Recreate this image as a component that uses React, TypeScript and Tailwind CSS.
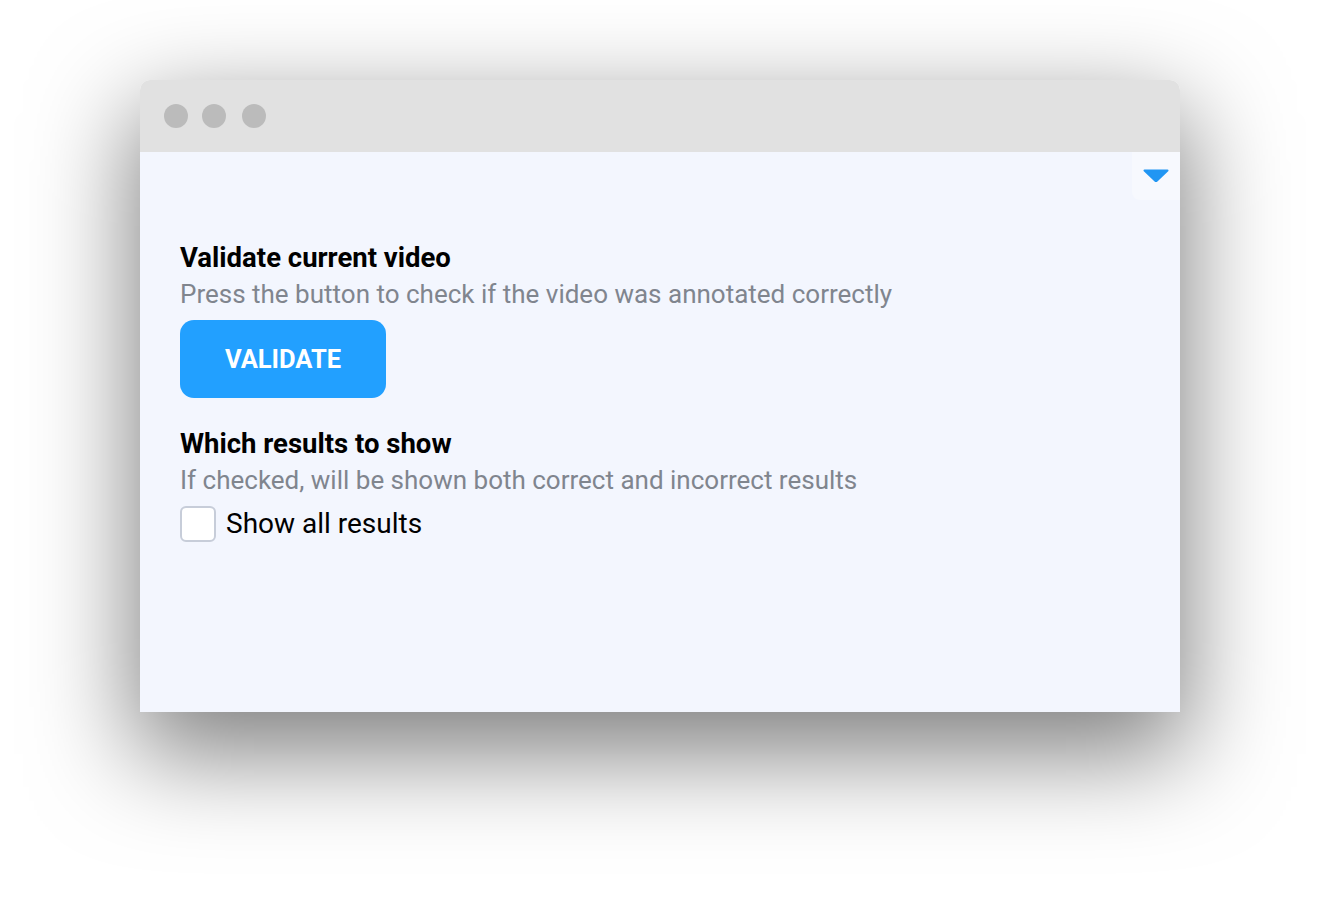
import React from "react";

export default function App() {
  return (
    <div className="w-[1320px] h-[912px] bg-white overflow-hidden" style={{ fontFamily: "Roboto, 'Liberation Sans', sans-serif" }}>
      <div className="ml-[140px] mt-[80px] w-[1040px] h-[632px] flex flex-col rounded-t-[10px] shadow-[0_36px_100px_6px_rgba(0,0,0,0.5)]">
        <div className="h-[72px] bg-[#e1e1e1] rounded-t-[10px] flex items-center pl-6 gap-[14px]">
          <div className="w-6 h-6 rounded-full bg-[#bbbbbb]" />
          <div className="w-6 h-6 rounded-full bg-[#bbbbbb]" />
          <div className="w-6 h-6 rounded-full bg-[#bbbbbb] ml-[2px]" />
        </div>
        <div className="relative flex-1 bg-[#f3f6fe] pl-10 pt-[88px]">
          <div className="absolute top-0 right-0 w-12 h-12 bg-[#f7f9fe] rounded-bl-[8px] flex items-center justify-center">
            <svg width="28" height="16" viewBox="0 0 28 16">
              <path d="M2.5 2.5 H25.5 L15 12.5 Q14 13.5 13 12.5 Z" fill="#2196f3" stroke="#2196f3" strokeWidth="2" strokeLinejoin="round" />
            </svg>
          </div>
          <div className="text-[27.5px] leading-[36px] font-bold text-black">Validate current video</div>
          <div className="text-[26px] leading-[36px] text-[#80858e]">Press the button to check if the video was annotated correctly</div>
          <button className="mt-2 w-[206px] h-[78px] rounded-[14px] bg-[#22a0ff] text-white text-[25.5px] font-bold pt-px">VALIDATE</button>
          <div className="mt-[28px] text-[27.5px] leading-[36px] font-bold text-black">Which results to show</div>
          <div className="text-[26px] leading-[37px] text-[#80858e]">If checked, will be shown both correct and incorrect results</div>
          <label className="mt-[7px] flex items-center gap-[10px]">
            <span className="w-9 h-9 rounded-[6px] border-2 border-[#c7cdd9] bg-white" />
            <span className="text-[28px] leading-[36px] text-black">Show all results</span>
          </label>
        </div>
      </div>
    </div>
  );
}
